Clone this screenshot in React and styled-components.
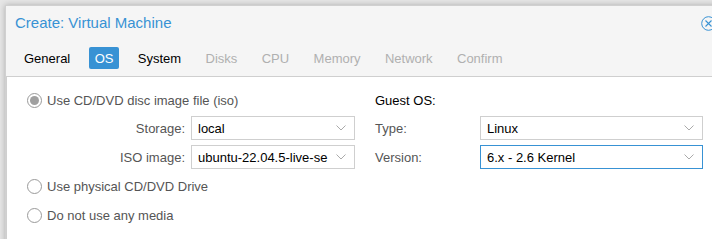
import React from "react";
import styled, { createGlobalStyle } from "styled-components";

const GlobalStyle = createGlobalStyle`
  html, body {
    margin: 0;
    padding: 0;
    overflow: hidden;
    background: #e6e6e6;
    font-family: "Liberation Sans", Arial, sans-serif;
    font-size: 13px;
  }
`;

const accent = "#3892d4";

const Page = styled.div`
  width: 712px;
  height: 239px;
  overflow: hidden;
  padding: 5px 0 0 5px;
  box-sizing: border-box;
`;

const Window = styled.div`
  width: 720px;
  height: 240px;
  background: #f5f5f5;
  border: 1px solid #d0d0d0;
  box-shadow: 0 0 6px rgba(0, 0, 0, 0.25);
  display: flex;
  flex-direction: column;
`;

const Header = styled.div`
  height: 33px;
  display: flex;
  align-items: center;
  justify-content: space-between;
  padding: 0 10px 0 9px;
`;

const Title = styled.span`
  color: ${accent};
  font-size: 15px;
`;

const CloseButton = styled.span`
  display: flex;
  width: 15px;
  height: 15px;
  margin-top: 1px;
`;

const TabBar = styled.div`
  display: flex;
  padding: 8px 0 7px 12px;
  gap: 12.4px;
`;

const Tab = styled.span`
  height: 22px;
  padding: 0 6px;
  display: flex;
  align-items: center;
  border-radius: 2px;
  background: ${(p) => (p.$active ? accent : "transparent")};
  color: ${(p) => (p.$active ? "#fff" : p.$disabled ? "#b0b0b0" : "#000")};
`;

const Body = styled.div`
  flex: 1;
  background: #fff;
  border-top: 1px solid #cfcfcf;
  border-left: 1px solid #cfcfcf;
  padding: 11px 0 0 20px;
  display: grid;
  grid-template-columns: 348px 1fr;
`;

const Column = styled.div`
  display: flex;
  flex-direction: column;
  gap: 5px;
  & > :first-child {
    margin-bottom: -1px;
  }
`;

const Row = styled.div`
  height: 24px;
  display: flex;
  align-items: center;
`;

const RadioRow = styled(Row)`
  gap: 5px;
  color: #555;
`;

const RadioCircle = styled.span`
  width: 13px;
  height: 13px;
  border: 1px solid #9a9a9a;
  border-radius: 50%;
  display: flex;
  align-items: center;
  justify-content: center;
  background: #fff;
  &::after {
    content: "";
    display: ${(p) => (p.$checked ? "block" : "none")};
    width: 9px;
    height: 9px;
    border-radius: 50%;
    background: #a0a0a0;
  }
`;

const Field = styled.div`
  height: 24px;
  display: grid;
  grid-template-columns: ${(p) => p.$labelWidth}px ${(p) => p.$inputWidth}px;
  column-gap: ${(p) => p.$gap}px;
  align-items: center;
`;

const FieldLabel = styled.span`
  color: #555;
  text-align: ${(p) => p.$align || "left"};
`;

const SectionLabel = styled.span`
  color: #000;
`;

const Combo = styled.div`
  height: 24px;
  box-sizing: border-box;
  border: 1px solid ${(p) => (p.$focused ? accent : "#cfcfcf")};
  background: #fff;
  display: flex;
  align-items: center;
  justify-content: space-between;
  padding: 0 8px 0 6px;
  color: #000;
  white-space: nowrap;
  overflow: hidden;
`;

const ComboText = styled.span`
  overflow: hidden;
  flex: 1;
`;

const Chevron = () => (
  <svg width="10" height="6" viewBox="0 0 10 6" style={{ flexShrink: 0, marginLeft: 8 }}>
    <path d="M0.5 0.5 L5 5 L9.5 0.5" fill="none" stroke="#aaa" strokeWidth="1" />
  </svg>
);

const CloseIcon = () => (
  <svg width="15" height="15" viewBox="0 0 15 15">
    <circle cx="7.5" cy="7.5" r="6.8" fill="none" stroke={accent} strokeWidth="1" />
    <path d="M4.5 4.5 L10.5 10.5 M10.5 4.5 L4.5 10.5" stroke={accent} strokeWidth="1.1" />
  </svg>
);

const Select = ({ value, focused }) => (
  <Combo $focused={focused}>
    <ComboText>{value}</ComboText>
    <Chevron />
  </Combo>
);

const Radio = ({ checked, children }) => (
  <RadioRow>
    <RadioCircle $checked={checked} />
    <span>{children}</span>
  </RadioRow>
);

const tabs = [
  { name: "General" },
  { name: "OS", active: true },
  { name: "System" },
  { name: "Disks", disabled: true },
  { name: "CPU", disabled: true },
  { name: "Memory", disabled: true },
  { name: "Network", disabled: true },
  { name: "Confirm", disabled: true },
];

export default function App() {
  return (
    <>
      <GlobalStyle />
      <Page>
        <Window>
          <Header>
            <Title>Create: Virtual Machine</Title>
            <CloseButton>
              <CloseIcon />
            </CloseButton>
          </Header>
          <TabBar>
            {tabs.map((t) => (
              <Tab key={t.name} $active={t.active} $disabled={t.disabled}>
                {t.name}
              </Tab>
            ))}
          </TabBar>
          <Body>
            <Column>
              <Radio checked>Use CD/DVD disc image file (iso)</Radio>
              <Field $labelWidth={158} $inputWidth={164} $gap={6}>
                <FieldLabel $align="right">Storage:</FieldLabel>
                <Select value="local" />
              </Field>
              <Field $labelWidth={158} $inputWidth={164} $gap={6}>
                <FieldLabel $align="right">ISO image:</FieldLabel>
                <Select value="ubuntu-22.04.5-live-se" />
              </Field>
              <Radio>Use physical CD/DVD Drive</Radio>
              <Radio>Do not use any media</Radio>
            </Column>
            <Column>
              <Row>
                <SectionLabel>Guest OS:</SectionLabel>
              </Row>
              <Field $labelWidth={105} $inputWidth={223} $gap={0}>
                <FieldLabel>Type:</FieldLabel>
                <Select value="Linux" />
              </Field>
              <Field $labelWidth={105} $inputWidth={223} $gap={0}>
                <FieldLabel>Version:</FieldLabel>
                <Select value="6.x - 2.6 Kernel" focused />
              </Field>
            </Column>
          </Body>
        </Window>
      </Page>
    </>
  );
}
